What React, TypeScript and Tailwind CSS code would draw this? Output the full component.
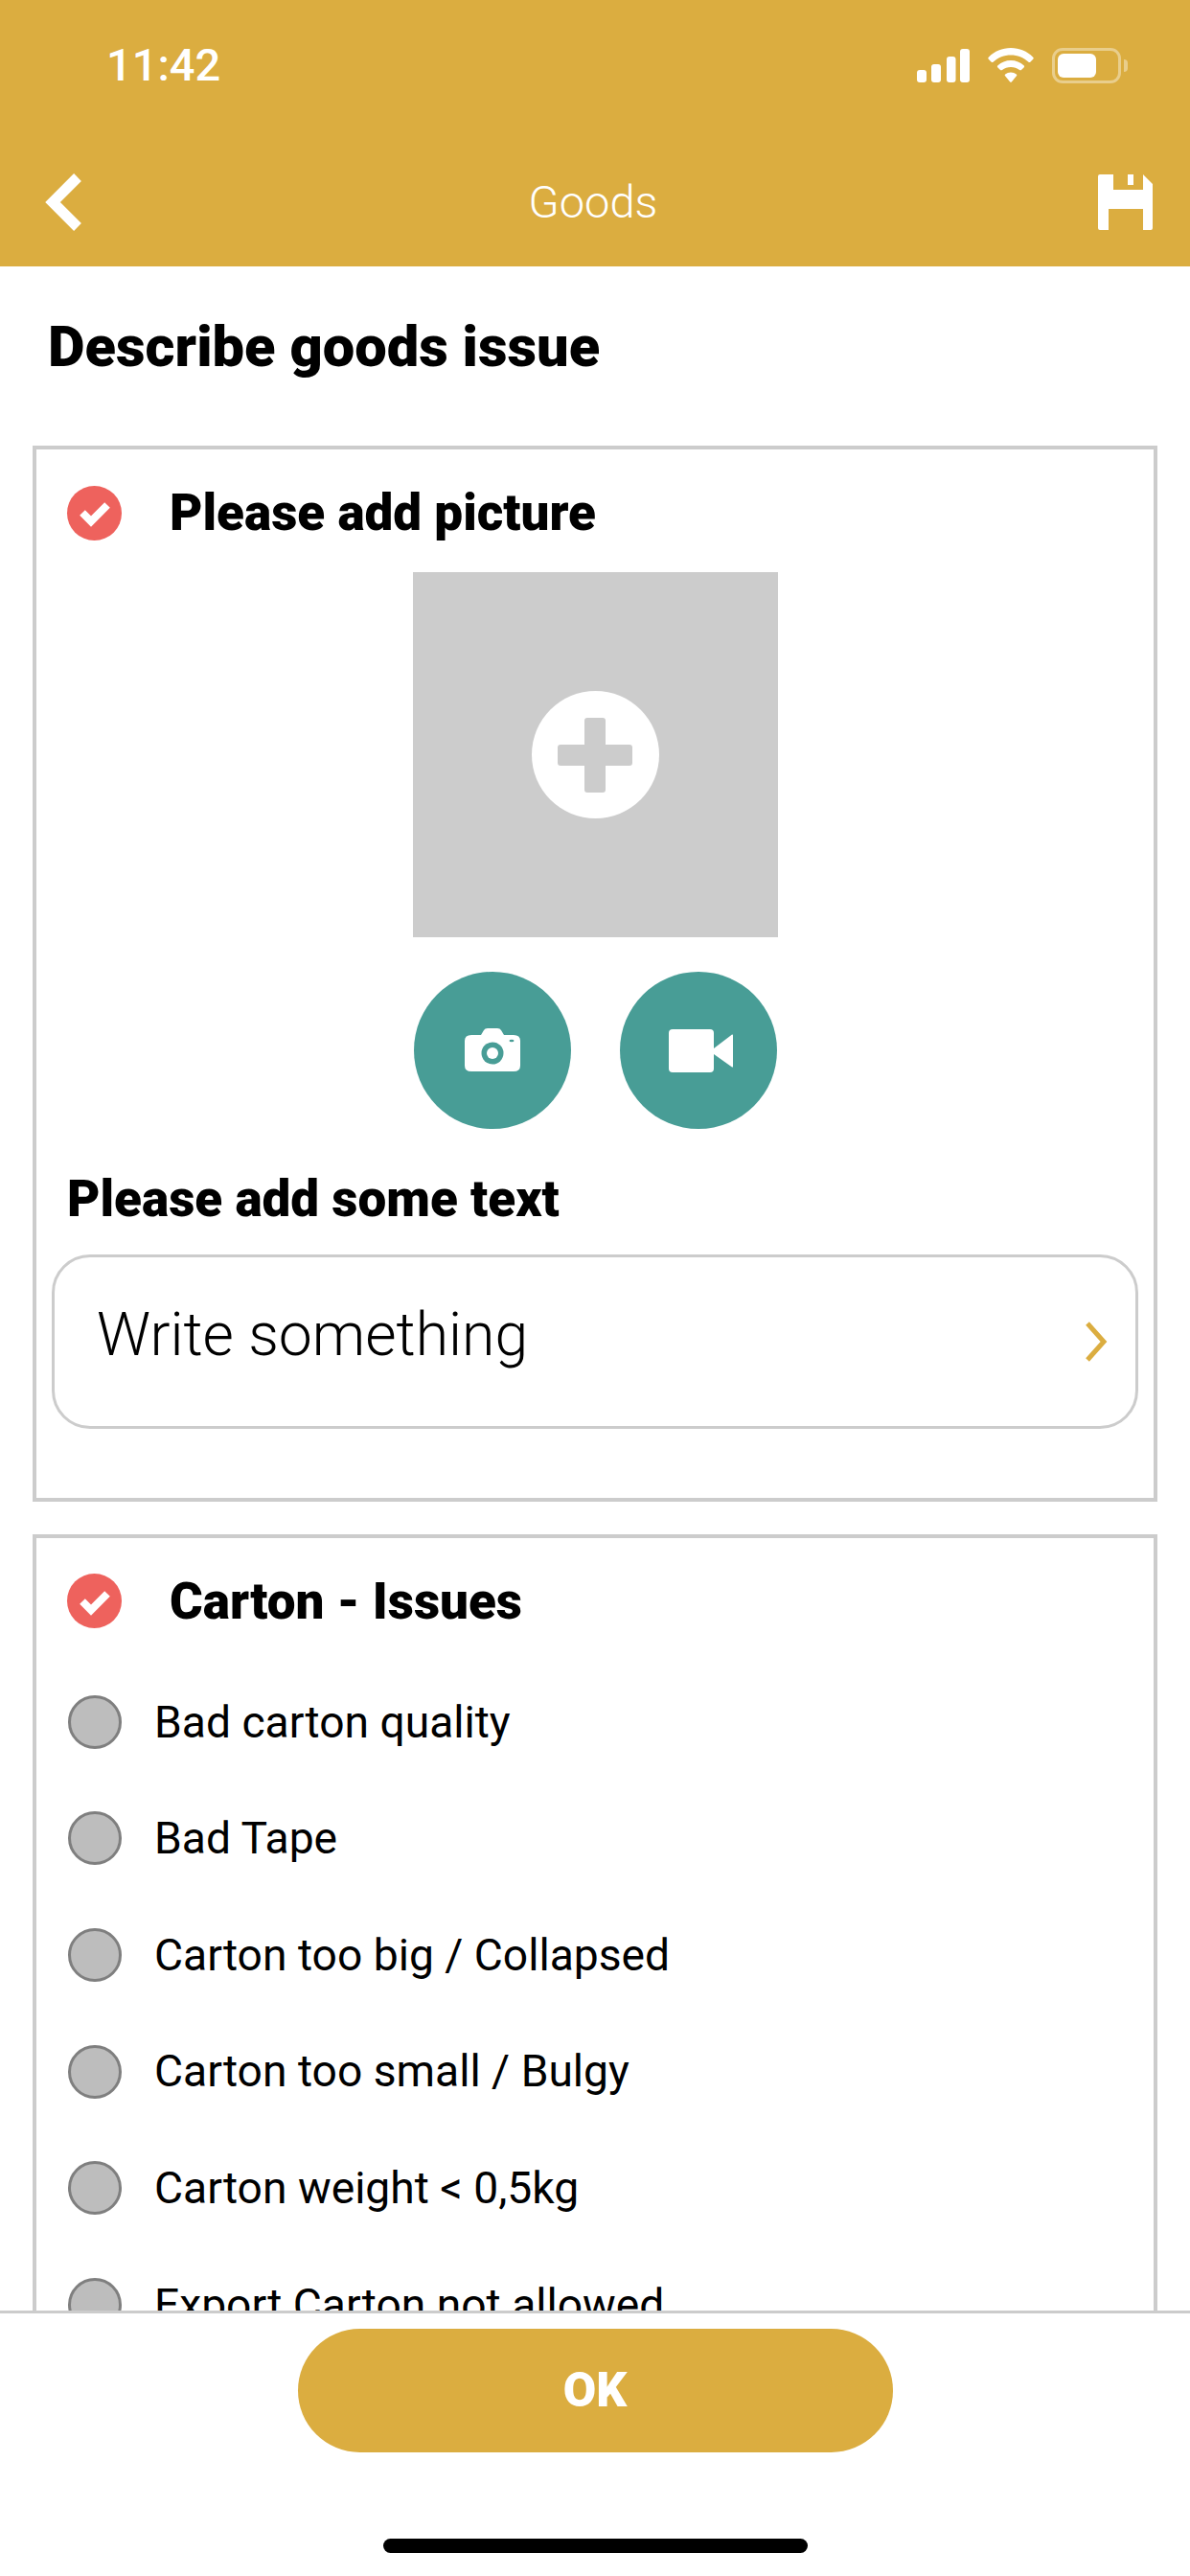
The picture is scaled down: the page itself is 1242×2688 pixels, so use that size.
const ISSUES = [
  "Bad carton quality",
  "Bad Tape",
  "Carton too big / Collapsed",
  "Carton too small / Bulgy",
  "Carton weight < 0,5kg",
  "Export Carton not allowed",
];

function StatusIcons() {
  return (
    <div className="flex items-center">
      <svg width="55" height="35" viewBox="0 0 55 35" fill="#fff">
        <rect x="0" y="22" width="10" height="13" rx="3" />
        <rect x="15" y="16" width="10" height="19" rx="3" />
        <rect x="31" y="8" width="9.500" height="27" rx="3" />
        <rect x="45" y="0" width="10" height="35" rx="3" />
      </svg>
      <svg className="ml-[19px]" width="48" height="36" viewBox="0 0 48 36" fill="#fff">
        <path d="M24 0C15 0 7 3.500 1 9.500C0 10.500 0 11 1 12L3.500 14.500C4.200 15.200 5 15.200 5.800 14.500C10.800 10 17 7.500 24 7.500C31 7.500 37.200 10 42.200 14.500C43 15.200 43.800 15.200 44.500 14.500L47 12C48 11 48 10.500 47 9.500C41 3.500 33 0 24 0Z" />
        <path d="M24 13C18.800 13 14 15 10.500 18.300C9.700 19 9.700 19.700 10.400 20.400L12.800 22.800C13.500 23.500 14.200 23.500 15 22.900C17.500 21 20.600 19.900 24 19.900C27.400 19.900 30.500 21 33 22.900C33.800 23.500 34.500 23.500 35.200 22.800L37.600 20.400C38.300 19.700 38.300 19 37.500 18.300C34 15 29.200 13 24 13Z" />
        <path d="M24 25.500C21.800 25.500 19.800 26.200 18.200 27.500C17.500 28.100 17.500 28.700 18.100 29.300L23 35.300C23.600 36 24.400 36 25 35.300L29.900 29.300C30.500 28.700 30.500 28.100 29.800 27.500C28.200 26.200 26.200 25.500 24 25.500Z" />
      </svg>
      <div className="ml-[19px] flex items-center">
        <div className="w-[72px] h-[37px] rounded-[11px] border-[3px] border-white/40 p-[3px]">
          <div className="w-[40px] h-full rounded-[6px] bg-white" />
        </div>
        <div className="ml-[3px] w-[4px] h-[13px] rounded-r-[4px] bg-white/40" />
      </div>
    </div>
  );
}

function SaveIcon() {
  return (
    <svg width="58" height="58" viewBox="0 0 58 58" fill="#fff">
      <path d="M2 0H16V16H47V0L57 10V56Q57 58 55 58H47V36H11V58H2Q0 58 0 56V2Q0 0 2 0Z" />
      <rect x="31" y="0" width="6" height="11" />
    </svg>
  );
}

function CheckBadge() {
  return (
    <div className="w-[57px] h-[57px] shrink-0 rounded-full bg-[#ee625d] flex items-center justify-center">
      <svg width="56" height="56" viewBox="0 0 56 56" fill="none">
        <path d="M15 28L24 37L41 20" stroke="#fff" strokeWidth="8" />
      </svg>
    </div>
  );
}

function IssueRow({ label }: { label: string }) {
  return (
    <div className="h-[121.6px] flex items-center pl-[33px]">
      <div className="w-[56px] h-[56px] shrink-0 rounded-full bg-[#bdbdbd] border-[3px] border-[#7f7f7f]" />
      <span className="ml-[34px] mt-[1px] text-[46.2px] text-black">{label}</span>
    </div>
  );
}

function PictureCard() {
  return (
    <section className="mx-[34px] border-[4px] border-[#cccccc] pb-[72px]">
      <div className="h-[128px] pt-[4px] pl-[32px] flex items-center">
        <CheckBadge />
        <h2 className="ml-[50px] mt-[2px] text-[53px] font-black text-black">Please add picture</h2>
      </div>
      <div className="mx-auto w-[381px] h-[381px] bg-[#cccccc] flex items-center justify-center">
        <div className="w-[133px] h-[133px] rounded-full bg-white flex items-center justify-center">
          <svg width="78" height="78" viewBox="0 0 78 78" fill="#cccccc">
            <rect x="28" y="0" width="22" height="78" rx="3" />
            <rect x="0" y="28" width="78" height="22" rx="3" />
          </svg>
        </div>
      </div>
      <div className="mt-[36px] flex justify-center gap-[51px]">
        <button className="w-[164px] h-[164px] rounded-full bg-[#489d96] flex items-center justify-center">
          <svg width="58" height="46" viewBox="0 0 58 46" fill="#fff">
            <path d="M17 7L20 2Q21 0 24 0H34Q37 0 38 2L41 7H51Q58 7 58 13V39Q58 45 51 45H7Q0 45 0 39V13Q0 7 7 7Z" />
            <circle cx="29" cy="26" r="11.500" fill="#489d96" />
            <circle cx="29" cy="26" r="6" fill="#fff" />
            <ellipse cx="49" cy="13" rx="2.500" ry="1.200" fill="#489d96" />
          </svg>
        </button>
        <button className="w-[164px] h-[164px] rounded-full bg-[#489d96] flex items-center justify-center">
          <svg className="ml-[6px]" width="67" height="45" viewBox="0 0 67 45" fill="#fff">
            <rect x="0" y="0" width="47" height="45" rx="4" />
            <path d="M47 20L66 5.500Q67 5 67 6.500V38.500Q67 40 66 39.500L47 26Z" />
          </svg>
        </button>
      </div>
      <h2 className="h-[131px] pt-[17px] pl-[32px] flex items-center text-[53px] font-black text-black">
        Please add some text
      </h2>
      <div className="ml-[16px] mr-[16px] h-[182px] rounded-[40px] border-[3px] border-[#cccccc] pl-[44px] pr-[28px] flex items-center justify-between">
        <span className="text-[62.5px] font-light text-black -mt-[14px]">Write something</span>
        <svg width="26" height="42" viewBox="0 0 26 42" fill="none">
          <path d="M4 2L21 21L4 40" stroke="#dbad40" strokeWidth="5" />
        </svg>
      </div>
    </section>
  );
}

export default function App() {
  return (
    <div className="w-[1242px] h-[2688px] flex flex-col overflow-hidden bg-white font-['Roboto',sans-serif]">
      <header className="h-[278px] shrink-0 bg-[#dbad40] text-white">
        <div className="h-[136px] pl-[111px] pr-[65px] flex items-center justify-between">
          <span className="text-[47px] font-medium">11:42</span>
          <StatusIcons />
        </div>
        <div className="h-[150px] pl-[46px] pr-[38px] flex items-center justify-between">
          <div className="w-[46px]">
            <svg width="40" height="60" viewBox="0 0 40 60" fill="none">
              <path d="M35 4L9 30L35 56" stroke="#fff" strokeWidth="11" />
            </svg>
          </div>
          <span className="text-[47px] font-light">Goods</span>
          <SaveIcon />
        </div>
      </header>

      <main className="flex-1 min-h-0 overflow-hidden">
        <h1 className="h-[166px] mb-[21px] pl-[50px] pt-[3px] flex items-center text-[59.6px] font-black text-black">
          Describe goods issue
        </h1>
        <PictureCard />
        <section className="mt-[34px] mx-[34px] border-[4px] border-[#cccccc]">
          <div className="h-[131px] pl-[32px] flex items-center">
            <CheckBadge />
            <h2 className="ml-[50px] mt-[2px] text-[53px] font-black text-black">Carton - Issues</h2>
          </div>
          {ISSUES.map((issue) => (
            <IssueRow key={issue} label={issue} />
          ))}
        </section>
      </main>

      <footer className="h-[277px] shrink-0 border-t-[3px] border-[#cccccc] flex flex-col items-center">
        <button className="mt-[16px] w-[621px] h-[129px] rounded-full bg-[#dbad40] text-[50px] font-black text-white">
          OK
        </button>
        <div className="mt-[90px] w-[443px] h-[15px] rounded-full bg-black" />
      </footer>
    </div>
  );
}
